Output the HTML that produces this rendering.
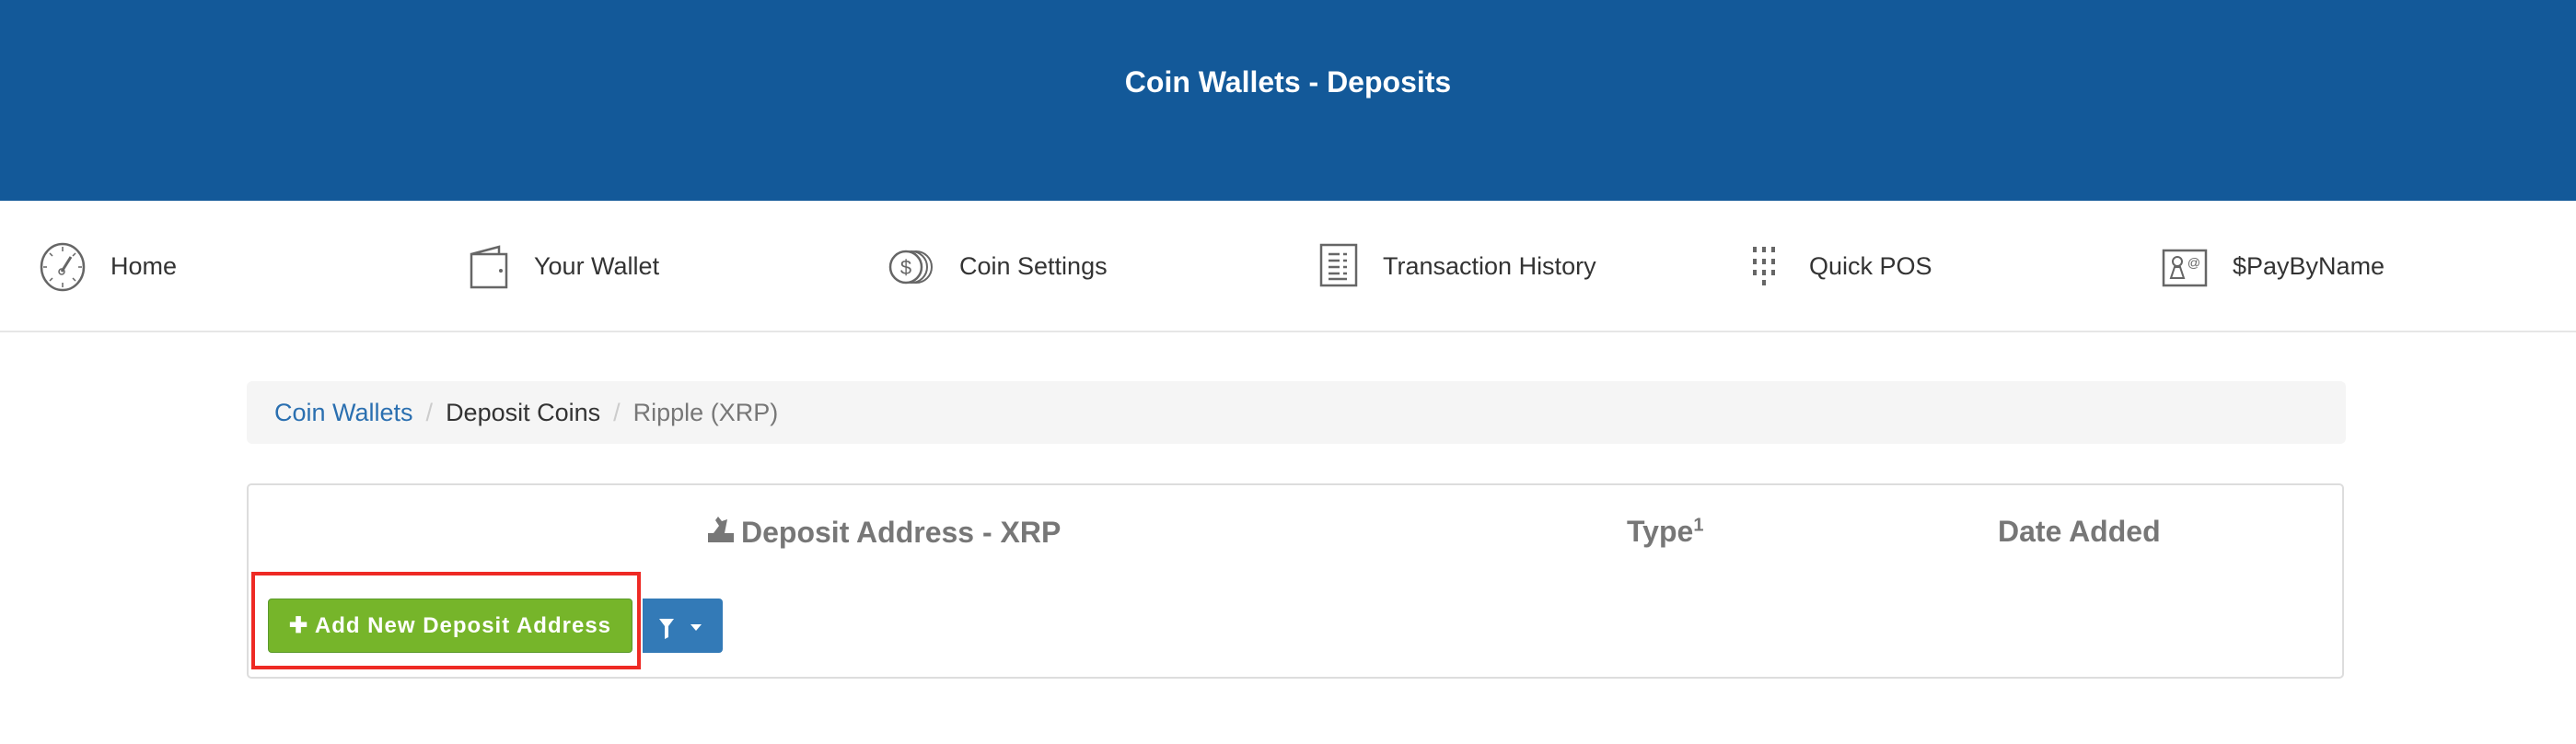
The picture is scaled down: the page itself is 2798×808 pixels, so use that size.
<!DOCTYPE html>
<html><head><meta charset="utf-8"><style>
*{margin:0;padding:0;box-sizing:border-box}
body{width:2798px;height:808px;background:#fff;font-family:"Liberation Sans",sans-serif;position:relative;overflow:hidden;color:#333}
.hdr{position:absolute;left:0;top:0;width:2798px;height:218px;background:#135999;color:#fff;font-weight:bold;font-size:32px;text-align:center;line-height:178px}
.nav{position:absolute;left:0;top:218px;width:2798px;height:143px;border-bottom:2px solid #e6e6e6}
.it{position:absolute;top:0;height:143px;display:flex;align-items:center;font-size:27px;color:#333}
.it svg{position:absolute;top:44px}
.bc{position:absolute;left:268px;top:414px;width:2280px;height:68px;background:#f5f5f5;border-radius:6px;font-size:27px;line-height:68px;padding-left:30px;color:#333}
.bc .a{color:#2a6fb0}.bc .s{color:#ccc;padding:0 14px}.bc .g{color:#777}
.pn{position:absolute;left:268px;top:525px;width:2278px;height:212px;border:2px solid #ddd;border-radius:5px}
.th{position:absolute;top:32px;font-size:32px;font-weight:bold;color:#777}
.red{position:absolute;left:273px;top:621px;width:423px;height:106px;border:4px solid #ee2a24}
.gb{position:absolute;left:291px;top:650px;width:396px;height:59px;background:#76b52a;border:1px solid #5a9a2a;border-radius:4px;color:#fff;font-size:24px;font-weight:bold;letter-spacing:1px;line-height:57px;text-align:center}
.bb{position:absolute;left:698px;top:650px;width:87px;height:59px;background:#337ab7;border-radius:0 4px 4px 0}
</style></head><body>
<div class="hdr">Coin Wallets - Deposits</div>
<div class="nav">
 <div class="it" style="left:43px"><svg width="50" height="56" viewBox="0 0 50 56" style="left:0"><ellipse cx="25" cy="28" rx="23" ry="25" fill="none" stroke="#666" stroke-width="2.5"/><path d="M25 6v5M25 45v5M4 28h4M42 28h4M11 13l3 3M39 13l-3 3M11 43l3-3M39 43l-3-3" stroke="#666" stroke-width="1.5"/><path d="M24 33L34 17" stroke="#666" stroke-width="3"/><circle cx="24" cy="33" r="3" fill="none" stroke="#666" stroke-width="1.5"/></svg><span style="margin-left:77px">Home</span></div>
 <div class="it" style="left:510px"><svg width="42" height="48" viewBox="0 0 42 48" style="left:0;top:48px"><path d="M2 10L32 2v8M2 10h38v36H2z" fill="none" stroke="#666" stroke-width="2.5"/><circle cx="34" cy="28" r="2" fill="#666"/></svg><span style="margin-left:70px">Your Wallet</span></div>
 <div class="it" style="left:965px"><svg width="50" height="40" viewBox="0 0 50 40" style="left:0;top:52px"><circle cx="30" cy="20" r="17" fill="none" stroke="#666" stroke-width="2"/><circle cx="25" cy="20" r="17" fill="#fff" stroke="#666" stroke-width="2"/><circle cx="19" cy="20" r="17" fill="#fff" stroke="#666" stroke-width="2.5"/><text x="19" y="28" font-size="22" text-anchor="middle" fill="#666" font-family="Liberation Sans">$</text></svg><span style="margin-left:77px">Coin Settings</span></div>
 <div class="it" style="left:1433px"><svg width="42" height="48" viewBox="0 0 42 48" style="left:0;top:46px"><rect x="2" y="2" width="38" height="44" fill="none" stroke="#666" stroke-width="2.5"/><path d="M10 12h12M26 12h4M10 19h12M26 19h4M10 26h12M26 26h4M10 33h12M26 33h4M10 39h20" stroke="#666" stroke-width="2.5"/></svg><span style="margin-left:69px">Transaction History</span></div>
 <div class="it" style="left:1902px"><svg width="30" height="46" viewBox="0 0 30 46" style="left:0;top:48px"><g fill="#666"><rect x="2" y="2" width="4" height="6"/><rect x="12" y="2" width="4" height="6"/><rect x="22" y="2" width="4" height="6"/><rect x="2" y="15" width="4" height="6"/><rect x="12" y="15" width="4" height="6"/><rect x="22" y="15" width="4" height="6"/><rect x="2" y="27" width="4" height="6"/><rect x="12" y="27" width="4" height="6"/><rect x="22" y="27" width="4" height="6"/><rect x="12" y="38" width="4" height="6"/></g></svg><span style="margin-left:63px">Quick POS</span></div>
 <div class="it" style="left:2348px"><svg width="50" height="42" viewBox="0 0 50 42" style="left:0;top:52px"><rect x="2" y="2" width="46" height="38" fill="none" stroke="#666" stroke-width="2.5"/><circle cx="17" cy="14" r="5" fill="none" stroke="#666" stroke-width="2"/><path d="M10 32l4-12h6l4 12z" fill="none" stroke="#666" stroke-width="2"/><text x="35" y="20" font-size="14" fill="#666" text-anchor="middle" font-family="Liberation Sans">@</text></svg><span style="margin-left:77px">$PayByName</span></div>
</div>
<div class="bc"><span class="a">Coin Wallets</span><span class="s">/</span>Deposit Coins<span class="s">/</span><span class="g">Ripple (XRP)</span></div>
<div class="pn">
 <div class="th" style="left:497px"><svg width="32" height="32" viewBox="0 0 32 32" style="vertical-align:-2px;margin-right:6px"><path d="M2 20h28v10H2z" fill="#777"/><path d="M8 20l6-8-4-6 3-4 4 5 6-2-3 15z" fill="#777"/></svg>Deposit Address - XRP</div>
 <div class="th" style="left:1497px">Type<sup style="font-size:20px">1</sup></div>
 <div class="th" style="left:1900px">Date Added</div>
</div>
<div class="red"></div>
<div class="gb">✚ Add New Deposit Address</div>
<div class="bb"><svg width="87" height="59" viewBox="0 0 87 59"><path d="M18 18h16M18 22h16l-6 8v12l-4 2V30z" fill="#fff"/><path d="M52 28h12l-6 7z" fill="#fff"/></svg></div>
</body></html>
